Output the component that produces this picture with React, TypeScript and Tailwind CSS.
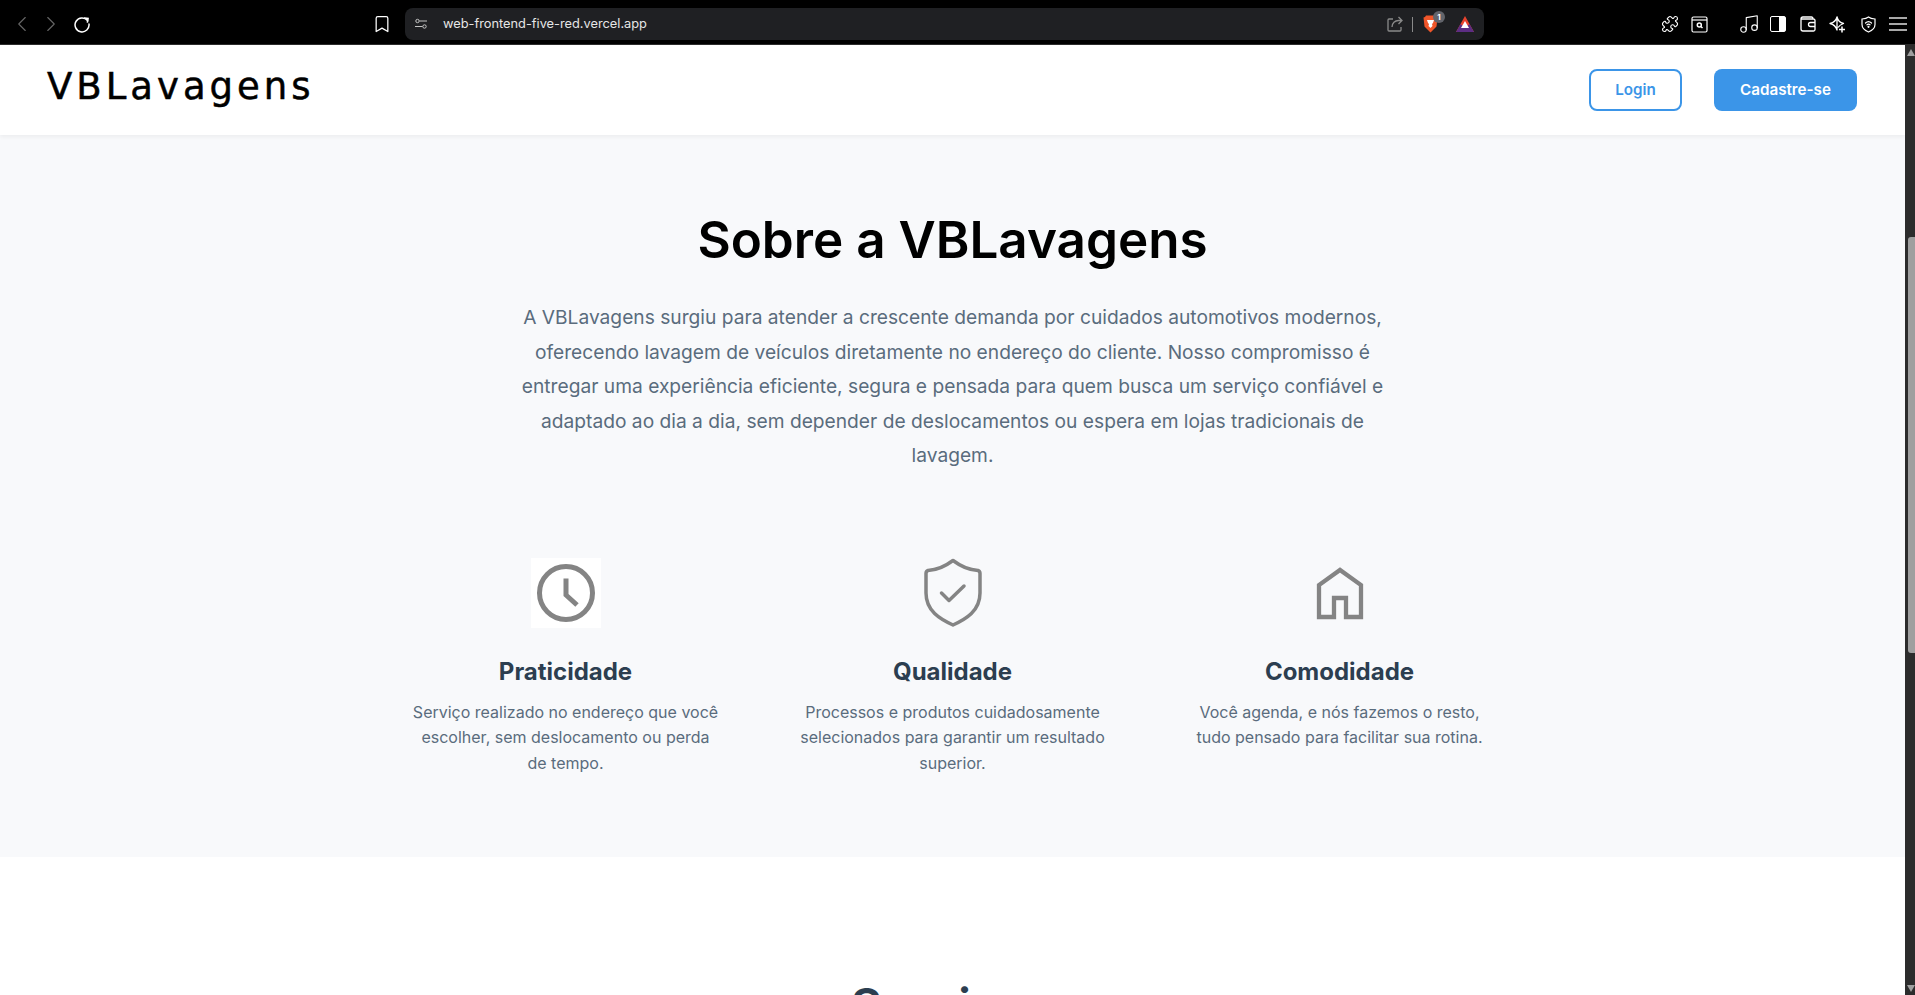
import { ChevronLeft, ChevronRight, Bookmark, Puzzle, Music } from 'lucide-react'

const inter = "font-['Inter',sans-serif]"

const features = [
  {
    title: 'Praticidade',
    text: ['Serviço realizado no endereço que você', 'escolher, sem deslocamento ou perda', 'de tempo.'],
    icon: (
      <svg viewBox="0 0 70 70" className="w-[70px] h-[70px] bg-white" fill="none" stroke="#848484" strokeWidth="5">
        <circle cx="35" cy="35" r="26.5" />
        <path d="M35 20.5V37l11 10" />
      </svg>
    ),
  },
  {
    title: 'Qualidade',
    text: ['Processos e produtos cuidadosamente', 'selecionados para garantir um resultado', 'superior.'],
    icon: (
      <svg viewBox="0 0 70 70" className="w-[70px] h-[70px]" fill="none" stroke="#848484" strokeWidth="3.5" strokeLinecap="round" strokeLinejoin="round">
        <path d="M35 2.5C41 7 49 12 60 12.5 61.500 13 62 14 62 15.500V35C62 53 48 61 35 67 22 61 8 53 8 35V15.500C8 14 8.500 13 10 12.500 21 12 29 7 35 2.500Z" />
        <path d="M23.500 35 31 42.500 46 28" />
      </svg>
    ),
  },
  {
    title: 'Comodidade',
    text: ['Você agenda, e nós fazemos o resto,', 'tudo pensado para facilitar sua rotina.'],
    icon: (
      <svg viewBox="0 0 70 70" className="w-[70px] h-[70px]" fill="none" stroke="#848484" strokeWidth="4.3">
        <path d="M14 59V27L35 12l21 15v32H41V40H29v19Z" />
      </svg>
    ),
  },
]

function BrowserBar() {
  return (
    <div className="h-[45px] shrink-0 bg-black border-b border-[#2c2c2c] flex items-center pt-[4px] pl-[9px]">
      <ChevronLeft className="shrink-0 w-[26px] h-[26px] text-[#666]" strokeWidth={1} />
      <ChevronRight className="shrink-0 w-[26px] h-[26px] text-[#666] ml-[3px]" strokeWidth={1} />
      <svg viewBox="0 0 18 18" className="shrink-0 ml-[9px] w-[18px] h-[18px]" fill="none" stroke="#fff" strokeWidth="1.500" strokeLinecap="round">
        <path d="M14.500 5.500A7 7 0 1 0 16 9" />
        <path d="M11.500 3l3.500 .5-.5 3.500" strokeWidth="1.700" />
      </svg>
      <Bookmark className="shrink-0 w-[20px] h-[20px] text-white ml-[281px]" strokeWidth={1.500} />
      <div className="shrink-0 ml-[13px] w-[1079px] h-[32px] rounded-[8px] bg-[#1f2023] flex items-center pl-[10px] pr-[10px]">
        <svg viewBox="0 0 12 12" className="w-[12px] h-[12px]" fill="none" stroke="#c4c4c4" strokeWidth="1">
          <circle cx="2.500" cy="3" r="1.700" />
          <path d="M4.500 3H12M0 8.500h7.500" />
          <circle cx="9.500" cy="8.500" r="1.700" />
        </svg>
        <span className="ml-[16px] text-[12.800px] text-[#e6e6e6]">web-frontend-five-red.vercel.app</span>
        <svg viewBox="0 0 16 16" className="ml-auto w-[16px] h-[16px]" fill="none" stroke="#8a8a8a" strokeWidth="1.300">
          <path d="M6 3H2a1 1 0 0 0-1 1v10a1 1 0 0 0 1 1h11a1 1 0 0 0 1-1v-3" />
          <path d="M5 11c0-4 3-6.500 6.500-6.500H15M11.500 1 15 4.500 11.500 8" />
        </svg>
        <div className="ml-[9px] w-px h-[15px] bg-[#8a8a8a]" />
        <div className="relative ml-[10px] w-[15px] h-[18px]">
          <svg viewBox="0 0 15 18" className="w-[15px] h-[18px]">
            <path d="M3 .500h9l1 1.500 1.500 .500-1 9-6 6-6-6-1-9L2 2Z" fill="#f0562a" />
            <path d="M4 5h7l-1 3-1 1 .5 2-2 2-2-2 .5-2-1-1Z" fill="#fff" />
          </svg>
          <span className="absolute -top-[4px] left-[10px] w-[12px] h-[12px] rounded-full bg-[#62646b] text-white text-[8px] leading-[12px] text-center font-bold">1</span>
        </div>
        <svg viewBox="0 0 18 16" className="ml-[18px] w-[18px] h-[16px]">
          <path d="M9 0 18 16H0Z" fill="#e8432e" />
          <path d="M0 16 4.500 8 9 11.500 13.500 8 18 16Z" fill="#5c2d83" />
          <path d="M9 5 13 12H5Z" fill="#fff" />
        </svg>
      </div>
      <Puzzle className="shrink-0 ml-[177px] w-[18px] h-[18px] text-white" strokeWidth={1.500} />
      <svg viewBox="0 0 17 17" className="shrink-0 ml-[12px] w-[17px] h-[17px]" fill="none" stroke="#fff" strokeWidth="1.200">
        <rect x="1" y="1" width="15" height="15" rx="1.500" />
        <path d="M1 4h15" />
        <circle cx="8.300" cy="9" r="2" strokeWidth="1.500" />
        <path d="M9.800 10.500 11.500 12" strokeWidth="1.500" />
      </svg>
      <Music className="shrink-0 ml-[30px] w-[22px] h-[22px] text-white" strokeWidth={1.200} />
      <div className="shrink-0 ml-[10px] w-[16px] h-[16px] rounded-[2px] border-[1.500px] border-white flex justify-end">
        <div className="w-[6px] h-full bg-white" />
      </div>
      <svg viewBox="0 0 16 16" className="shrink-0 ml-[14px] w-[16px] h-[16px]" fill="none" stroke="#fff" strokeWidth="1.300">
        <path d="M13 3V2.500A1.500 1.500 0 0 0 11.500 1H3A2 2 0 0 0 1 3v10a2 2 0 0 0 2 2h10.500a1.500 1.500 0 0 0 1.500-1.500v-9A1.500 1.500 0 0 0 13.500 3H1.500" />
        <path d="M15 6.500h-4.500a2 2 0 0 0 0 4H15" />
      </svg>
      <svg viewBox="0 0 17 17" className="shrink-0 ml-[13px] w-[17px] h-[17px]" fill="none" stroke="#fff" strokeWidth="1.300" strokeLinejoin="round">
        <path d="M8 1c1 4 2.500 5.500 6.500 6.500C11.500 8.500 10 10 9 11.500M8 14C7 10.500 5 8.500 1 7.500 5 6.500 7 5 8 1Z" />
        <path d="M13 10.500v6M10 13.500h6" strokeWidth="1.500" />
      </svg>
      <svg viewBox="0 0 15 17" className="shrink-0 ml-[15px] w-[15px] h-[17px]" fill="none" stroke="#fff" strokeWidth="1.200" strokeLinecap="round">
        <path d="M7.500 1C9 2.200 11 2.800 14 3v5.500c0 3.500-3 6-6.500 7.500C4 14.500 1 12 1 8.500V3c3-.200 5-.800 6.500-2Z" />
        <path d="M4.500 7a4.500 4.500 0 0 1 6 0M6 8.800a2.300 2.300 0 0 1 3 0" />
        <circle cx="7.500" cy="10.800" r=".5" />
      </svg>
      <div className="shrink-0 ml-[13px] w-[18px] flex flex-col gap-[4px]">
        <div className="h-[2px] bg-[#a8a8a8]" />
        <div className="h-[2px] bg-[#a8a8a8]" />
        <div className="h-[2px] bg-[#a8a8a8]" />
      </div>
    </div>
  )
}

function Scrollbar() {
  return (
    <div className="w-[10px] shrink-0 bg-[#2c2c2c] flex flex-col items-end">
      <div className="mt-[4px] w-0 h-0 border-l-[4px] border-r-[4px] border-b-[7px] border-l-transparent border-r-transparent border-b-[#9f9f9f]" />
      <div className="mt-[181px] w-[7px] h-[416px] rounded-l-[3px] bg-[#9f9f9f]" />
      <div className="mt-auto mb-[3px] w-0 h-0 border-l-[4px] border-r-[4px] border-t-[7px] border-l-transparent border-r-transparent border-t-[#9f9f9f]" />
    </div>
  )
}

export default function App() {
  return (
    <div className={`h-[995px] w-full overflow-hidden flex flex-col ${inter}`}>
      <BrowserBar />
      <div className="flex flex-1 min-h-0">
        <div className="flex-1 min-w-0 overflow-hidden">
          <header className="h-[90px] bg-white flex items-center justify-between pl-[47px] pr-[48px] shadow-[0_2px_4px_rgba(0,0,0,0.05)] relative">
            <div className="font-['DejaVu_Sans',sans-serif] text-[37px] leading-none tracking-[4px] text-black -mt-[8px] [-webkit-text-stroke:0.5px_black]">VBLavagens</div>
            <div className="flex gap-[32px]">
              <button className="w-[93px] h-[42px] pt-[1px] rounded-[8px] border-2 border-[#3b95e8] text-[#3b95e8] text-[15.200px] font-semibold bg-white">Login</button>
              <button className="w-[143px] h-[42px] pt-[1px] rounded-[8px] bg-[#3b95e8] text-white text-[15.200px] font-semibold">Cadastre-se</button>
            </div>
          </header>
          <section className="h-[722px] bg-[#f8f9fb] flex flex-col items-center pt-[75px]">
            <h1 className="text-[51.200px] leading-[58px] font-semibold text-black">Sobre a VBLavagens</h1>
            <p className="mt-[32px] w-[880px] text-center text-[19.200px] leading-[34.560px] text-[#5a6c7d]">
              A VBLavagens surgiu para atender a crescente demanda por cuidados automotivos modernos, oferecendo lavagem de veículos diretamente no endereço do cliente. Nosso compromisso é entregar uma experiência eficiente, segura e pensada para quem busca um serviço confiável e adaptado ao dia a dia, sem depender de deslocamentos ou espera em lojas tradicionais de lavagem.
            </p>
            <div className="mt-[85px] flex gap-[67px]">
              {features.map((f) => (
                <div key={f.title} className="w-[320px] flex flex-col items-center text-center">
                  {f.icon}
                  <h3 className="mt-[29px] text-[24px] leading-[29px] font-bold text-[#2c3e50]">{f.title}</h3>
                  <p className="mt-[14px] text-[16px] leading-[25.600px] text-[#5a6c7d]">
                    {f.text.map((line) => (
                      <span key={line} className="block">{line}</span>
                    ))}
                  </p>
                </div>
              ))}
            </div>
          </section>
          <section className="bg-white pt-[120px] flex justify-center">
            <h2 className="text-[48px] leading-[58px] font-semibold text-[#2c3e50]">Serviços</h2>
          </section>
        </div>
        <Scrollbar />
      </div>
    </div>
  )
}
